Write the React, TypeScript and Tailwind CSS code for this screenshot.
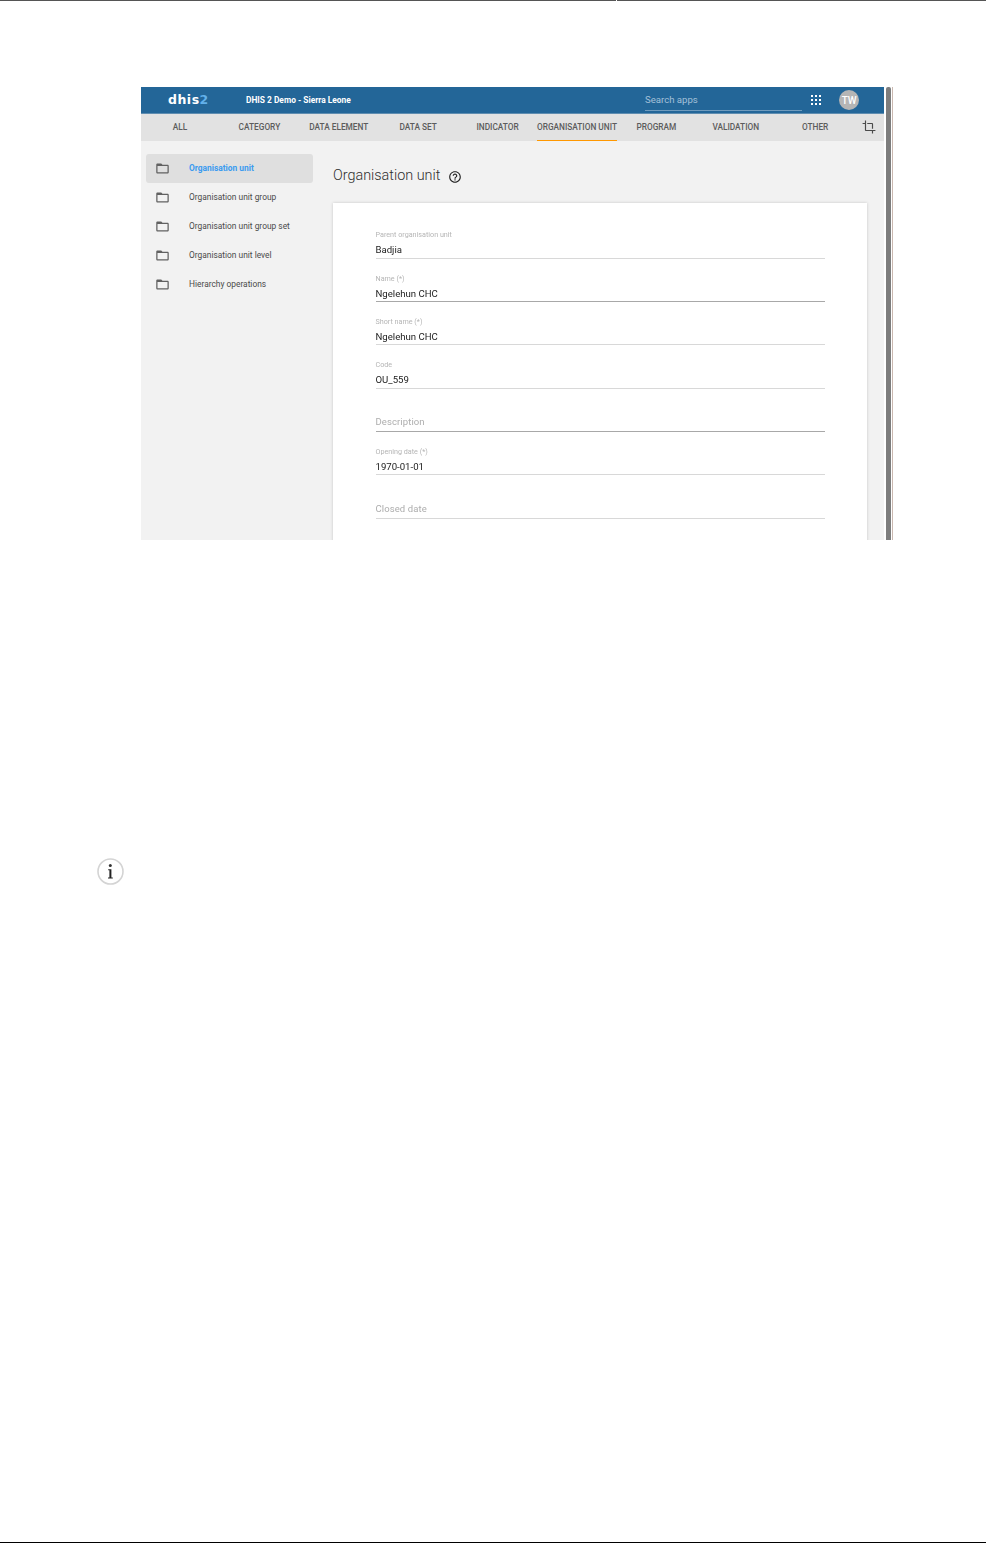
import React from 'react';

const tabs = ['ALL', 'CATEGORY', 'DATA ELEMENT', 'DATA SET', 'INDICATOR', 'ORGANISATION UNIT', 'PROGRAM', 'VALIDATION', 'OTHER'];
const sideItems = ['Organisation unit', 'Organisation unit group', 'Organisation unit group set', 'Organisation unit level', 'Hierarchy operations'];

const fields = [
  { label: 'Parent organisation unit', value: 'Badjia' },
  { label: 'Name (*)', value: 'Ngelehun CHC', dark: true },
  { label: 'Short name (*)', value: 'Ngelehun CHC' },
  { label: 'Code', value: 'OU_559' },
  { label: 'Description', dark: true },
  { label: 'Opening date (*)', value: '1970-01-01' },
  { label: 'Closed date' },
];

function FolderIcon() {
  return (
    <svg width="15" height="15" viewBox="0 0 24 24" fill="#616161">
      <path d="M20 6h-8l-2-2H4c-1.1 0-1.99.9-1.99 2L2 18c0 1.1.9 2 2 2h16c1.1 0 2-.9 2-2V8c0-1.1-.9-2-2-2zm0 12H4V8h16v10z" />
    </svg>
  );
}

function Field({ label, value, dark }: { label: string; value?: string; dark?: boolean }) {
  return (
    <div className={`h-[43.35px] flex flex-col justify-end border-b ${dark ? 'border-[#a8a8a8]' : 'border-[#d8d8d8]'}`}>
      {value ? (
        <>
          <div className="text-[7.2px] leading-[10px] text-[#b5b5b5] mb-[4px]">{label}</div>
          <div className="text-[9.6px] leading-[12px] text-[#1c1c1c] mb-[1.5px]">{value}</div>
        </>
      ) : (
        <div className="text-[9.5px] leading-[12px] tracking-[0.1px] text-[#adadad] mb-[3px]">{label}</div>
      )}
    </div>
  );
}

function Screenshot() {
  return (
    <div className="ml-[141px] mt-[86px] w-[752px] h-[453px] flex overflow-hidden blur-[0.3px] font-['Roboto',sans-serif]">
      <div className="w-[743px] flex flex-col bg-[#f2f2f2]">
        <div className="h-[27px] shrink-0 bg-[#236698] border-b border-[#5f8db0] flex items-center text-white">
          <div className="ml-[27px] w-[78px] font-['DejaVu_Sans',sans-serif] text-[12.5px] tracking-[0.5px] font-bold">
            dhis<span className="text-[#62b0ea]">2</span>
          </div>
          <div className="text-[8.4px] font-bold w-[399px]">DHIS 2 Demo - Sierra Leone</div>
          <div className="w-[157px] h-[20px] mt-[1px] border-b border-[#6f9bbd] text-[9.6px] leading-[18px] text-[#a3c0d8]">Search apps</div>
          <div className="ml-[9px] grid grid-cols-3 gap-[1.5px]">
            {Array.from({ length: 9 }).map((_, i) => (
              <div key={i} className="w-[2.4px] h-[2.4px] bg-white" />
            ))}
          </div>
          <div className="ml-[18px] w-[20px] h-[20px] rounded-full bg-[#b5b5b5] flex items-center justify-center text-[10px] font-medium">TW</div>
        </div>
        <div className="h-[27px] shrink-0 bg-[#e2e2e2] flex -ml-[0.7px]">
          {tabs.map((tab) => (
            <div
              key={tab}
              className={`w-[79.4px] shrink-0 flex items-center justify-center whitespace-nowrap text-[8.3px] font-medium text-[#5c5c5c] border-b ${tab === 'ORGANISATION UNIT' ? 'border-[#ff9800]' : 'border-transparent'}`}
            >
              {tab}
            </div>
          ))}
          <div className="ml-[7px] pb-[2px] flex items-center">
            <svg width="14" height="14" viewBox="0 0 24 24" fill="#4a4a4a">
              <path d="M17 15h2V7c0-1.1-.9-2-2-2H9v2h8v8zM7 17V1H5v4H1v2h4v10c0 1.1.9 2 2 2h10v4h2v-4h4v-2H7z" />
            </svg>
          </div>
        </div>
        <div className="flex flex-1 min-h-0">
          <div className="w-[192px] shrink-0 pt-[13px] pl-[5px]">
            {sideItems.map((item, i) => (
              <div
                key={item}
                className={`w-[167px] h-[29px] pl-[9px] flex items-center rounded-[3px] ${i === 0 ? 'bg-[#dfdfdf]' : ''}`}
              >
                <FolderIcon />
                <span className={`ml-[19px] pt-[0.5px] text-[8.4px] ${i === 0 ? 'font-bold text-[#3a9bf0]' : 'text-[#4a4a4a]'}`}>{item}</span>
              </div>
            ))}
          </div>
          <div className="w-[534px]">
            <div className="h-[62px] pt-[8px] flex items-center">
              <span className="text-[14.4px] font-light text-[#2e2e2e]">Organisation unit</span>
              <svg className="ml-[8px] mt-[1px]" width="14" height="14" viewBox="0 0 24 24" fill="#222">
                <path d="M11 18h2v-2h-2v2zm1-16C6.48 2 2 6.48 2 12s4.48 10 10 10 10-4.48 10-10S17.52 2 12 2zm0 18c-4.41 0-8-3.59-8-8s3.59-8 8-8 8 3.59 8 8-3.59 8-8 8zm0-14c-2.21 0-4 1.79-4 4h2c0-1.1.9-2 2-2s2 .9 2 2c0 2-3 1.75-3 5h2c0-2.25 3-2.5 3-5 0-2.21-1.79-4-4-4z" />
              </svg>
            </div>
            <div className="h-[400px] bg-white shadow-[0_0_3px_rgba(0,0,0,0.18)] pl-[42.5px] pr-[42px] pt-[12.4px]">
              {fields.map((f) => (
                <Field key={f.label} {...f} />
              ))}
            </div>
          </div>
        </div>
      </div>
      <div className="ml-[2px] w-[5px] bg-[#7d7d7d] rounded-t-[2px]" />
      <div className="w-px ml-px bg-[#c9b8b0]" />
    </div>
  );
}

export default function App() {
  return (
    <div className="h-[1543px] w-[986px] bg-white flex flex-col overflow-hidden">
      <div className="flex shrink-0">
        <div className="w-[616px] h-px bg-[#555555]" />
        <div className="ml-px flex-1 h-px bg-[#555555]" />
      </div>
      <Screenshot />
      <div className="ml-[97px] mt-[318px]">
        <svg width="27" height="27" viewBox="0 0 27 27">
          <circle cx="13.5" cy="13.5" r="12.5" fill="#fff" stroke="#d4d4d4" strokeWidth="1.6" />
          <circle cx="13.3" cy="7.6" r="1.5" fill="#333" />
          <path d="M11.2 11.2h3.2v8.2h1.4v1.1h-4.8v-1.1h1.4v-7.1h-1.2z" fill="#222" />
        </svg>
      </div>
      <div className="mt-auto h-px bg-black shrink-0" />
    </div>
  );
}
